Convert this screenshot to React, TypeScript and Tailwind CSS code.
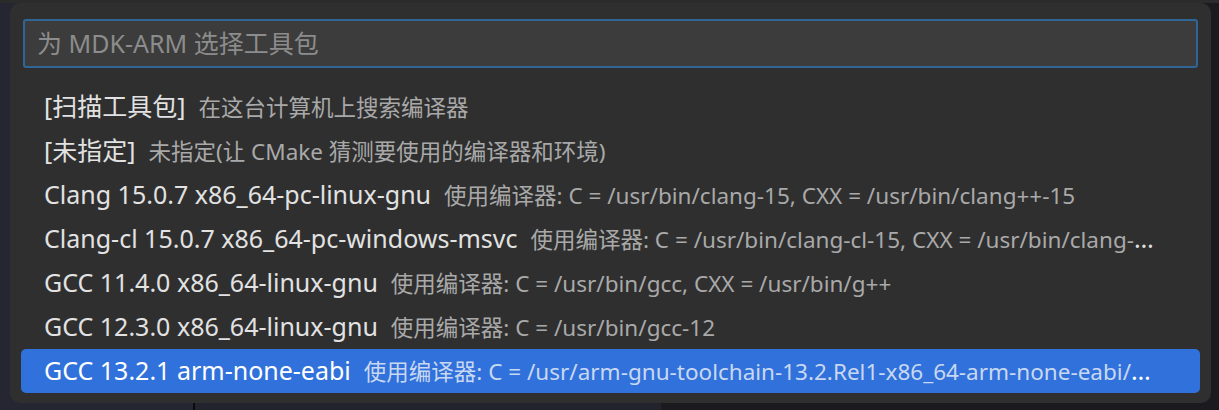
import React from "react";

type Item = { label: string; description: string };

const items: Item[] = [
  { label: "[扫描工具包]", description: "在这台计算机上搜索编译器" },
  { label: "[未指定]", description: "未指定(让 CMake 猜测要使用的编译器和环境)" },
  {
    label: "Clang 15.0.7 x86_64-pc-linux-gnu",
    description: "使用编译器: C = /usr/bin/clang-15, CXX = /usr/bin/clang++-15",
  },
  {
    label: "Clang-cl 15.0.7 x86_64-pc-windows-msvc",
    description: "使用编译器: C = /usr/bin/clang-cl-15, CXX = /usr/bin/clang-cl-15",
  },
  {
    label: "GCC 11.4.0 x86_64-linux-gnu",
    description: "使用编译器: C = /usr/bin/gcc, CXX = /usr/bin/g++",
  },
  {
    label: "GCC 12.3.0 x86_64-linux-gnu",
    description: "使用编译器: C = /usr/bin/gcc-12",
  },
  {
    label: "GCC 13.2.1 arm-none-eabi",
    description:
      "使用编译器: C = /usr/arm-gnu-toolchain-13.2.Rel1-x86_64-arm-none-eabi/bin/arm-none-eabi-gcc",
  },
];

const selected = 6;

export default function App() {
  return (
    <div
      className="relative w-[1219px] h-[410px] overflow-hidden bg-[#23242e]"
      style={{ fontFamily: '"Noto Sans", "Noto Sans CJK SC", sans-serif' }}
    >
      {/* editor behind the picker */}
      <div className="h-[3px] bg-[#2b2b2b]" />
      <div className="flex h-[407px]">
        <div className="w-[193px] bg-[#252631]" />
        <div className="w-[2px] bg-[#0b0b0d]" />
        <div className="w-[466px] bg-[#22232c]" />
        <div className="flex-1 bg-[#1b1b1f]" />
      </div>

      {/* quick pick */}
      <div className="absolute left-[10px] top-[3px] w-[1201px] h-[400px] rounded-[10px] bg-[#2f2f2f] px-[11px] pt-[16px]">
        <div className="mx-[2px] h-[49px] rounded-[3px] border-2 border-[#2f6597] bg-[#3c3c3c] flex items-center px-[12px]">
          <span className="text-[25px] text-[#8c8c8c]">为 MDK-ARM 选择工具包</span>
        </div>

        <div className="mt-[17px] flex flex-col">
          {items.map((item, i) => (
            <div
              key={item.label}
              className={`h-[44px] rounded-[5px] flex items-center pl-[23px] pr-[38px] ${
                i === selected ? "bg-[#3071db]" : ""
              }`}
            >
              <div
                className={`truncate text-[25px] leading-[44px] ${
                  i === selected ? "text-white" : "text-[#e2e2e2]"
                }`}
              >
                {item.label}
                <span
                  className={`ml-[13px] text-[22.5px] ${
                    i === selected ? "text-[#c9d8f2]" : "text-[#a9a9a9]"
                  }`}
                >
                  {item.description}
                </span>
              </div>
            </div>
          ))}
        </div>
      </div>
    </div>
  );
}
